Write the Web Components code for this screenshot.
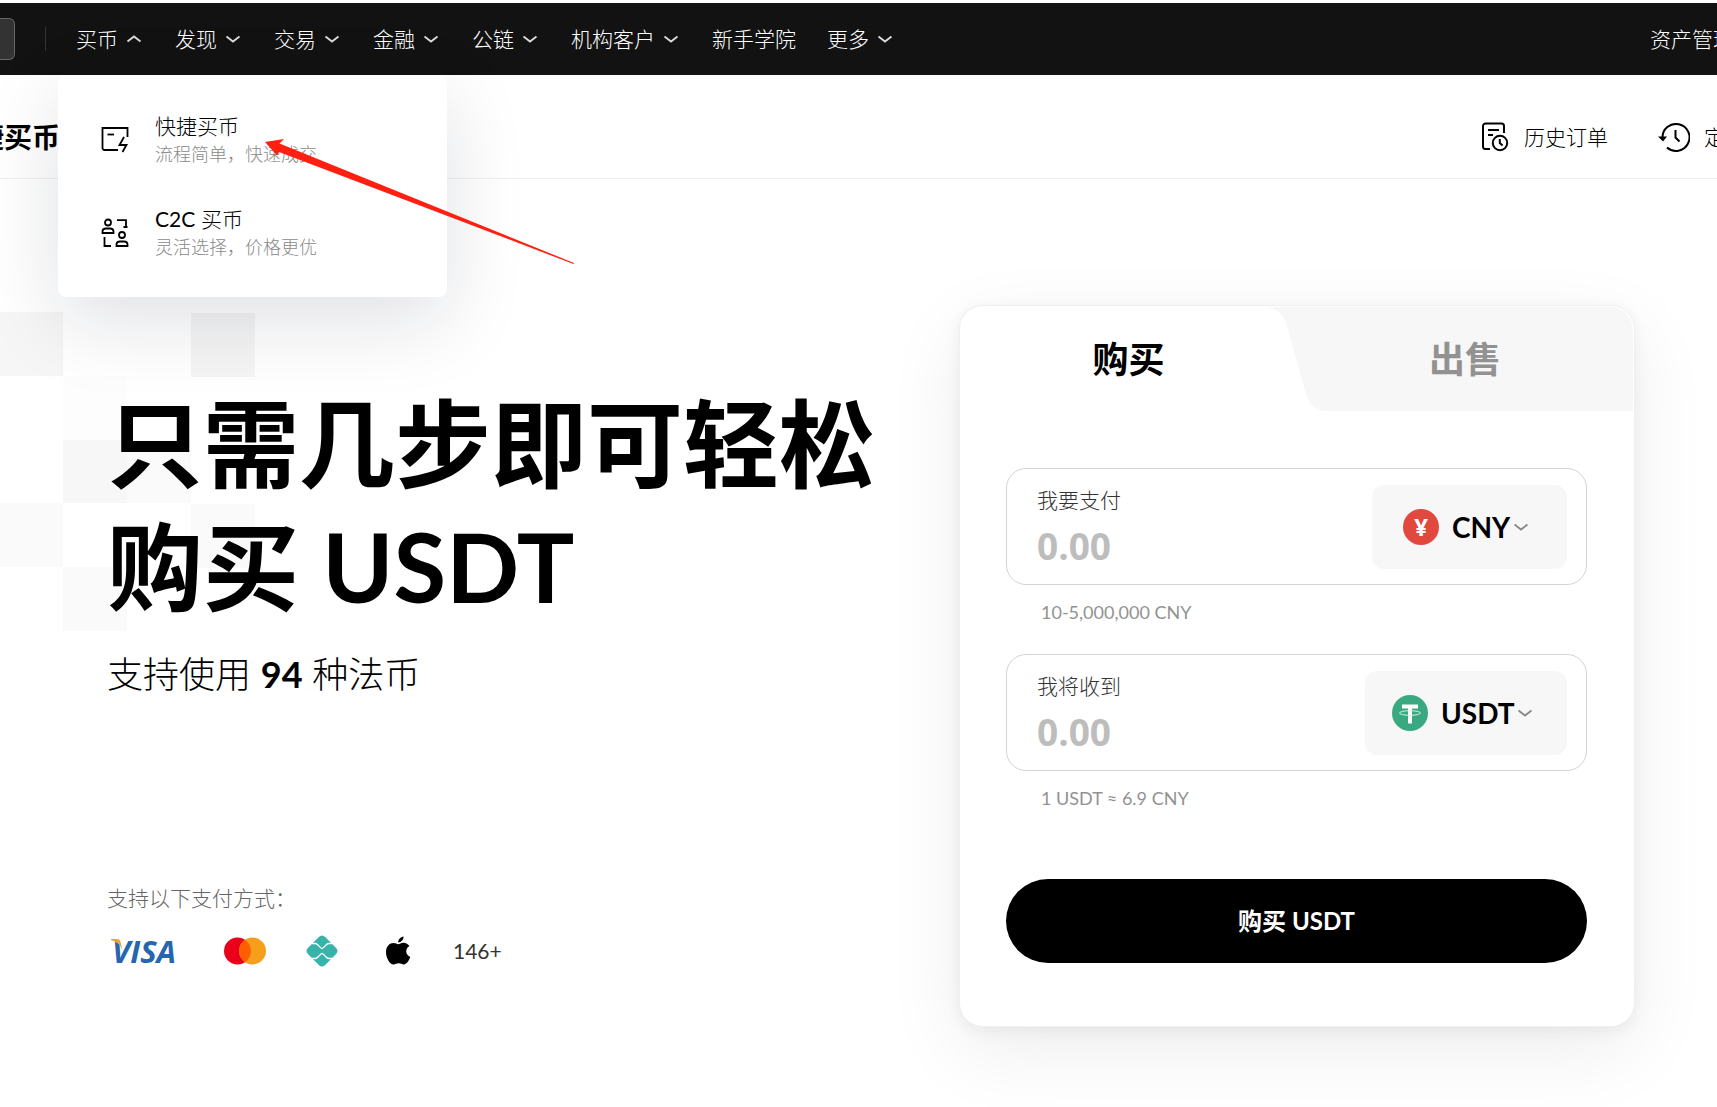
<!DOCTYPE html>
<html lang="zh-CN">
<head>
<meta charset="utf-8">
<meta name="viewport" content="width=device-width, initial-scale=1">
<title>快捷买币</title>
<style>
  body {
    margin: 0;
    background: #fff;
    color: #000;
    font: 300 21px/30px Lato, "Noto Sans CJK SC", sans-serif;
    overflow-x: hidden;
  }
</style>
</head>
<body>
<buy-page></buy-page>

<script>
const ICONS = {
  down: { box: "0 0 20 20", svg: `<path d="M3.5 7.5 10 12.5l6.5-5" fill="none" stroke="currentColor" stroke-width="1.8"/>` },
  up: { box: "0 0 20 20", svg: `<path d="M3.5 12.5 10 7.5l6.5 5" fill="none" stroke="currentColor" stroke-width="1.8"/>` },
  express: {
    box: "0 0 30 30",
    svg: `<g fill="none" stroke="currentColor" stroke-width="1.8"><path d="M18 26H4.500a2 2 0 0 1-2-2V4h25v9"/><path d="M7.500 10.500h6.500"/><path d="M24 13l-4.500 8h7L22.500 28"/></g>`
  },
  c2c: {
    box: "0 0 30 30",
    svg: `<g fill="none" stroke="currentColor" stroke-width="1.800"><circle cx="8" cy="5.500" r="3"/><path d="M2.500 16v-1.500q0-3 3.500-3h4q3.500 0 3.500 3V16z"/><circle cx="22" cy="18" r="3"/><path d="M16.500 29v-1.500q0-3 3.500-3h4q3.500 0 3.500 3V29z"/><path d="M17 3.200h9V11M23.500 10h4M11 29H4.500v-9"/></g>`
  },
  orders: {
    box: "0 0 30 30",
    svg: `<g fill="none" stroke="currentColor" stroke-width="2"><path d="M10 27H5.500a2.500 2.500 0 0 1-2.500-2.500V4a2.500 2.500 0 0 1 2.500-2.500h16A2.500 2.500 0 0 1 24 4v7"/><path d="M8 8h11M8 13h5"/><circle cx="20" cy="21" r="7.200"/><path d="M19.800 17v4l2.800 2.500"/></g>`
  },
  recurring: {
    box: "0 0 32 32",
    svg: `<g fill="none" stroke="currentColor" stroke-width="2"><path d="M4.500 17A13.500 13.500 0 1 1 9 26.500"/><path d="M17.500 9v7.500l4 4"/></g><path d="M0 15.500h9L5 20.500z" fill="currentColor"/>`
  },
  mastercard: {
    box: "0 0 42 28",
    svg: `<circle cx="13.500" cy="14" r="13.500" fill="#eb001b"/><circle cx="28.500" cy="14" r="13.500" fill="#f79e1b"/><path d="M21 2.800a13.500 13.500 0 0 1 0 22.400a13.500 13.500 0 0 1 0-22.400z" fill="#ff5f00"/>`
  },
  pix: {
    box: "0 0 32 32",
    svg: `<path d="M12.800 2.100q3.200-3.200 6.400 0l10.700 10.700q3.200 3.200 0 6.400L19.200 29.900q-3.200 3.200-6.400 0L2.100 19.200q-3.200-3.200 0-6.400z" fill="#37b3aa"/><path d="M5.500 8.500H9q1.400 0 2.400 1l3.400 3.400q1.200 1.200 2.400 0l3.400-3.400q1-1 2.400-1h3.500M5.500 23.500H9q1.400 0 2.400-1l3.400-3.400q1.200-1.200 2.400 0l3.400 3.400q1 1 2.400 1h3.500" fill="none" stroke="#fff" stroke-width="1.300"/>`
  },
  apple: {
    box: "0 0 26 30",
    svg: `<path d="M18.500.500c.300 2.900-2.300 6-5.300 6C12.900 3.600 15.700.800 18.500.500zM13.300 8.200c1.200 0 2.900-1.400 5.200-1.400 2.400 0 4.700 1.300 5.900 3.300-4.700 2.800-3.900 9 .900 11-.900 2.600-3.400 7.400-6.400 7.400-2 0-2.900-1.200-5.200-1.200-2.400 0-3.300 1.200-5.200 1.200C4.800 28.500 1 21.800 1 16.200c0-5.900 3.700-9.200 7.500-9.200 2.100 0 3.600 1.200 4.800 1.200z" fill="#000"/>`
  },
  tether: {
    box: "0 0 36 36",
    svg: `<circle cx="18" cy="18" r="18" fill="#3aa981"/><path d="M10 9.500h16v4h-6v15h-4v-15h-6z" fill="#fff"/><ellipse cx="18" cy="18" rx="10.500" ry="2.300" fill="none" stroke="#d5efe5" stroke-width="1"/>`
  }
};

class UiIcon extends HTMLElement {
  constructor() {
    super();
    this.attachShadow({ mode: "open" });
  }

  connectedCallback() {
    const icon = ICONS[this.getAttribute("name")];
    this.shadowRoot.innerHTML = `
      <style>
        :host { display: inline-block; flex: none; width: 20px; height: 20px; }
        svg { display: block; width: 100%; height: 100%; }
      </style>
      <svg viewBox="${icon.box}" aria-hidden="true">${icon.svg}</svg>
    `;
  }
}

class NavItem extends HTMLElement {
  constructor() {
    super();
    this.attachShadow({ mode: "open" });
  }

  connectedCallback() {
    const arrow = this.getAttribute("arrow");
    this.shadowRoot.innerHTML = `
      <style>
        :host { display: block; flex: none; }
        a { display: flex; align-items: center; gap: 6px; color: #fff; text-decoration: none; white-space: nowrap; }
        ui-icon { color: #ddd; }
      </style>
      <a href="#"><slot></slot>${arrow ? `<ui-icon name="${arrow}"></ui-icon>` : ""}</a>
    `;
  }
}

class MenuEntry extends HTMLElement {
  constructor() {
    super();
    this.attachShadow({ mode: "open" });
  }

  connectedCallback() {
    this.shadowRoot.innerHTML = `
      <style>
        :host { display: block; }
        a { display: flex; align-items: center; gap: 25px; color: #000; text-decoration: none; }
        ui-icon { width: 30px; height: 30px; }
        b, small { display: block; font-weight: inherit; }
        b { line-height: 30px; }
        small { font-size: 18px; line-height: 26px; color: #8a8a8a; }
      </style>
      <a href="#">
        <ui-icon name="${this.getAttribute("icon")}"></ui-icon>
        <span><b><slot></slot></b><small><slot name="note"></slot></small></span>
      </a>
    `;
  }
}

class BuyMenu extends HTMLElement {
  constructor() {
    super();
    this.attachShadow({ mode: "open" });
    this.shadowRoot.innerHTML = `
      <style>
        :host {
          display: flex; flex-direction: column; gap: 37px; box-sizing: border-box;
          width: 389px; padding: 36px 42px 37px; border-radius: 8px; background: #fff;
          box-shadow: 0 24px 80px rgba(18, 24, 48, .13);
        }
        .latin { font-weight: 400; }
      </style>
      <menu-entry icon="express">快捷买币<span slot="note">流程简单，快速成交</span></menu-entry>
      <menu-entry icon="c2c"><span class="latin">C2C</span> 买币<span slot="note">灵活选择，价格更优</span></menu-entry>
    `;
  }
}

class SiteHeader extends HTMLElement {
  constructor() {
    super();
    this.attachShadow({ mode: "open" });
    this.shadowRoot.innerHTML = `
      <style>
        :host { display: block; position: relative; z-index: 2; border-top: 3px solid #fff; }
        header { display: flex; align-items: center; height: 72px; background: #121212; overflow: hidden; }
        .search {
          box-sizing: border-box; width: 15px; height: 42px; padding: 0; border: 1px solid #666; border-left: 0;
          border-radius: 0 6px 6px 0; background: #333;
        }
        .rule { width: 1px; height: 24px; margin: 0 30px; background: #333; }
        nav { display: flex; gap: 31px; }
        .account { flex: 0 0 67px; min-width: 0; margin-left: auto; }
        buy-menu { position: absolute; left: 58px; top: 100%; }
      </style>
      <header>
        <input class="search" type="text" aria-label="搜索">
        <span class="rule"></span>
        <nav>
          <nav-item arrow="up">买币</nav-item>
          <nav-item arrow="down">发现</nav-item>
          <nav-item arrow="down">交易</nav-item>
          <nav-item arrow="down">金融</nav-item>
          <nav-item arrow="down">公链</nav-item>
          <nav-item arrow="down">机构客户</nav-item>
          <nav-item>新手学院</nav-item>
          <nav-item arrow="down">更多</nav-item>
        </nav>
        <nav-item class="account">资产管理</nav-item>
      </header>
      <buy-menu></buy-menu>
    `;
  }
}

class SubBar extends HTMLElement {
  constructor() {
    super();
    this.attachShadow({ mode: "open" });
    this.shadowRoot.innerHTML = `
      <style>
        :host {
          display: flex; align-items: center; justify-content: space-between; box-sizing: border-box;
          height: 104px; padding-top: 21px; border-bottom: 1px solid #eee; overflow: hidden; white-space: nowrap;
        }
        h2 { display: flex; justify-content: flex-end; width: 60px; margin: 0; font-size: 28px; font-weight: 700; }
        div { display: flex; align-items: center; gap: 50px; }
        a { display: flex; align-items: center; gap: 14px; color: #000; text-decoration: none; }
        ui-icon { width: 30px; height: 30px; }
        .last { width: 59px; }
        .last ui-icon { width: 32px; height: 32px; }
      </style>
      <h2>捷买币</h2>
      <div>
        <a href="#"><ui-icon name="orders"></ui-icon>历史订单</a>
        <a href="#" class="last"><ui-icon name="recurring"></ui-icon>定</a>
      </div>
    `;
  }
}

class HeroCopy extends HTMLElement {
  constructor() {
    super();
    this.attachShadow({ mode: "open" });
    this.shadowRoot.innerHTML = `
      <style>
        :host { display: block; padding-top: 76px; }
        h1 { margin: 0; font-size: 96px; line-height: 123px; font-weight: 700; white-space: nowrap; }
        .sub { margin: 20px 0 0; font-size: 36px; line-height: 54px; }
        .sub b { font-weight: 700; }
        .pay { margin: 182px 0 0; color: #666; }
        ul { display: flex; align-items: center; height: 32px; margin: 22px 0 0; padding: 0; list-style: none; }
        li { display: flex; }
        .visa { position: relative; width: 70px; margin: 0 42px 0 5px; font: italic 700 31px/32px "Open Sans", sans-serif; color: #2566af; }
        .visa svg { position: absolute; left: -1px; top: 4px; }
        .mc { width: 42px; height: 28px; margin-right: 40px; }
        .pix { width: 32px; height: 32px; margin-right: 47px; }
        .apple { width: 26px; height: 30px; margin-right: 42px; }
        .more { color: #333; font-weight: 400; }
      </style>
      <h1>只需几步即可轻松<br>购买 USDT</h1>
      <p class="sub">支持使用 <b>94</b> 种法币</p>
      <p class="pay">支持以下支付方式：</p>
      <ul>
        <li class="visa">VISA<svg width="12" height="11" viewBox="0 0 12 11"><path d="M0 0h6q3 0 3.500 3l2 8Q8 3 0 1z" fill="#e6a540"/></svg></li>
        <li><ui-icon class="mc" name="mastercard"></ui-icon></li>
        <li><ui-icon class="pix" name="pix"></ui-icon></li>
        <li><ui-icon class="apple" name="apple"></ui-icon></li>
        <li class="more">146+</li>
      </ul>
    `;
  }
}

class AmountField extends HTMLElement {
  constructor() {
    super();
    this.attachShadow({ mode: "open" });
  }

  connectedCallback() {
    const label = this.getAttribute("label");
    const unit = this.getAttribute("unit");
    this.shadowRoot.innerHTML = `
      <style>
        :host { display: block; }
        .box {
          display: flex; align-items: center; justify-content: space-between; box-sizing: border-box;
          height: 117px; padding: 0 19px 0 30px; border: 1px solid #d4d4d4; border-radius: 20px;
        }
        .entry { flex: 1; min-width: 0; }
        .entry label { display: block; color: #333; }
        input {
          display: block; width: 100%; height: 46px; margin-top: 8px; padding: 0; border: 0; outline: 0;
          background: none; font: 700 37px/46px "Open Sans", sans-serif; color: #000;
        }
        input::placeholder { color: #bdbdbd; opacity: 1; }
        .unit {
          display: flex; align-items: center; justify-content: center; box-sizing: border-box;
          min-width: 195px; height: 84px; padding: 0 27px; border-radius: 12px; background: #f7f7f7;
        }
        select {
          appearance: none; margin: 0; padding: 0; border: 0; outline: 0; background: none; color: #000;
          font: 700 28px/36px Lato, sans-serif;
        }
        .arrow { margin-right: 5px; color: #888; }
        .hint { margin: 12px 0 0 35px; font-size: 18px; line-height: 30px; font-weight: 400; color: #929292; }
      </style>
      <div class="box">
        <div class="entry">
          <label for="amount">${label}</label>
          <input id="amount" type="text" inputmode="decimal" placeholder="0.00">
        </div>
        <div class="unit">
          <slot name="coin"></slot>
          <select aria-label="${label}币种"><option>${unit}</option></select>
          <ui-icon class="arrow" name="down"></ui-icon>
        </div>
      </div>
      <p class="hint"><slot></slot></p>
    `;
  }
}

class TradeCard extends HTMLElement {
  constructor() {
    super();
    this.attachShadow({ mode: "open" });
    this.shadowRoot.innerHTML = `
      <style>
        :host {
          display: block; align-self: start; border: 1px solid #f0f0f0; border-radius: 24px; background: #fff;
          box-shadow: 0 4px 16px rgba(0, 0, 0, .06), 0 24px 80px rgba(0, 0, 0, .07);
        }
        button { border: 0; margin: 0; padding: 0; font-family: inherit; font-weight: 700; cursor: pointer; }
        .tabs { display: grid; grid-template-columns: 1fr 1fr; }
        .tabs button { position: relative; height: 105px; background: none; font-size: 36px; line-height: 54px; color: #000; }
        .tabs .off {
          margin: 1px 1px 0 0; height: 104px; border-radius: 0 23px 0 0; color: #929292;
          background: linear-gradient(#f7f7f7, #f7f7f7) 28px 0 no-repeat;
        }
        .off svg { position: absolute; left: -32px; top: 0; }
        .off span { position: relative; }
        form { padding: 57px 47px 63px 46px; }
        amount-field + amount-field { margin-top: 27px; }
        .go { width: 100%; height: 84px; margin-top: 66px; border-radius: 42px; background: #000; color: #fff; font-size: 24px; line-height: 36px; }
        .coin { width: 36px; height: 36px; margin-right: 13px; }
        .cny { border-radius: 50%; background: #e1493f; color: #fff; text-align: center; font: 700 24px/36px "Noto Sans", sans-serif; }
      </style>
      <div class="tabs" role="tablist">
        <button type="button" role="tab" aria-selected="true">购买</button>
        <button type="button" role="tab" aria-selected="false" class="off">
          <svg width="62" height="104" viewBox="0 0 62 104"><path d="M0 0C14 1 20 10 22 19L40 84C43 96 50 104 62 104V0z" fill="#f7f7f7"/></svg>
          <span>出售</span>
        </button>
      </div>
      <form>
        <amount-field label="我要支付" unit="CNY"><span slot="coin" class="coin cny">¥</span>10-5,000,000 CNY</amount-field>
        <amount-field label="我将收到" unit="USDT"><ui-icon slot="coin" class="coin" name="tether"></ui-icon>1 USDT ≈ 6.9 CNY</amount-field>
        <button type="button" class="go">购买 USDT</button>
      </form>
    `;
  }
}

class BuyPage extends HTMLElement {
  constructor() {
    super();
    this.attachShadow({ mode: "open" });
    this.shadowRoot.innerHTML = `
      <style>
        :host { display: block; position: relative; }
        main {
          position: relative; display: grid; grid-template-columns: minmax(0, 1fr) 676px;
          padding: 126px 82px 80px 107px;
        }
        main > * { position: relative; }
        /* faded pixel tiles behind the headline */
        .tiles { position: absolute; left: 0; top: 133px; }
        /* pointer to the first menu entry */
        .pointer { position: absolute; z-index: 3; left: 264px; top: 138px; pointer-events: none; }
      </style>
      <site-header></site-header>
      <sub-bar></sub-bar>
      <main>
        <svg class="tiles" width="256" height="320" aria-hidden="true">
          <path d="M0 0h63v64H0z" fill="#f6f6f6"/>
          <path d="M191 1h64v64h-64z" fill="#f5f5f5"/>
          <path d="M63 64h64v64H63z" fill="#fdfdfd"/>
          <path d="M63 128h64v63H63z" fill="#f7f7f7"/>
          <path d="M127 128h64v63h-64z" fill="#fafafa"/>
          <path d="M0 191h63v64H0zM191 192h64v64h-64zM63 255h64v64H63z" fill="#fafafa"/>
        </svg>
        <hero-copy></hero-copy>
        <trade-card></trade-card>
      </main>
      <svg class="pointer" width="312" height="128" viewBox="264 138 312 128" aria-hidden="true">
        <path d="M265 142L284 139L279.500 143.500L574 263L573.500 264L279 152L277 155.500z" fill="#ff2012"/>
      </svg>
    `;
  }
}

customElements.define("ui-icon", UiIcon);
customElements.define("nav-item", NavItem);
customElements.define("menu-entry", MenuEntry);
customElements.define("buy-menu", BuyMenu);
customElements.define("site-header", SiteHeader);
customElements.define("sub-bar", SubBar);
customElements.define("hero-copy", HeroCopy);
customElements.define("amount-field", AmountField);
customElements.define("trade-card", TradeCard);
customElements.define("buy-page", BuyPage);
</script>
</body>
</html>
